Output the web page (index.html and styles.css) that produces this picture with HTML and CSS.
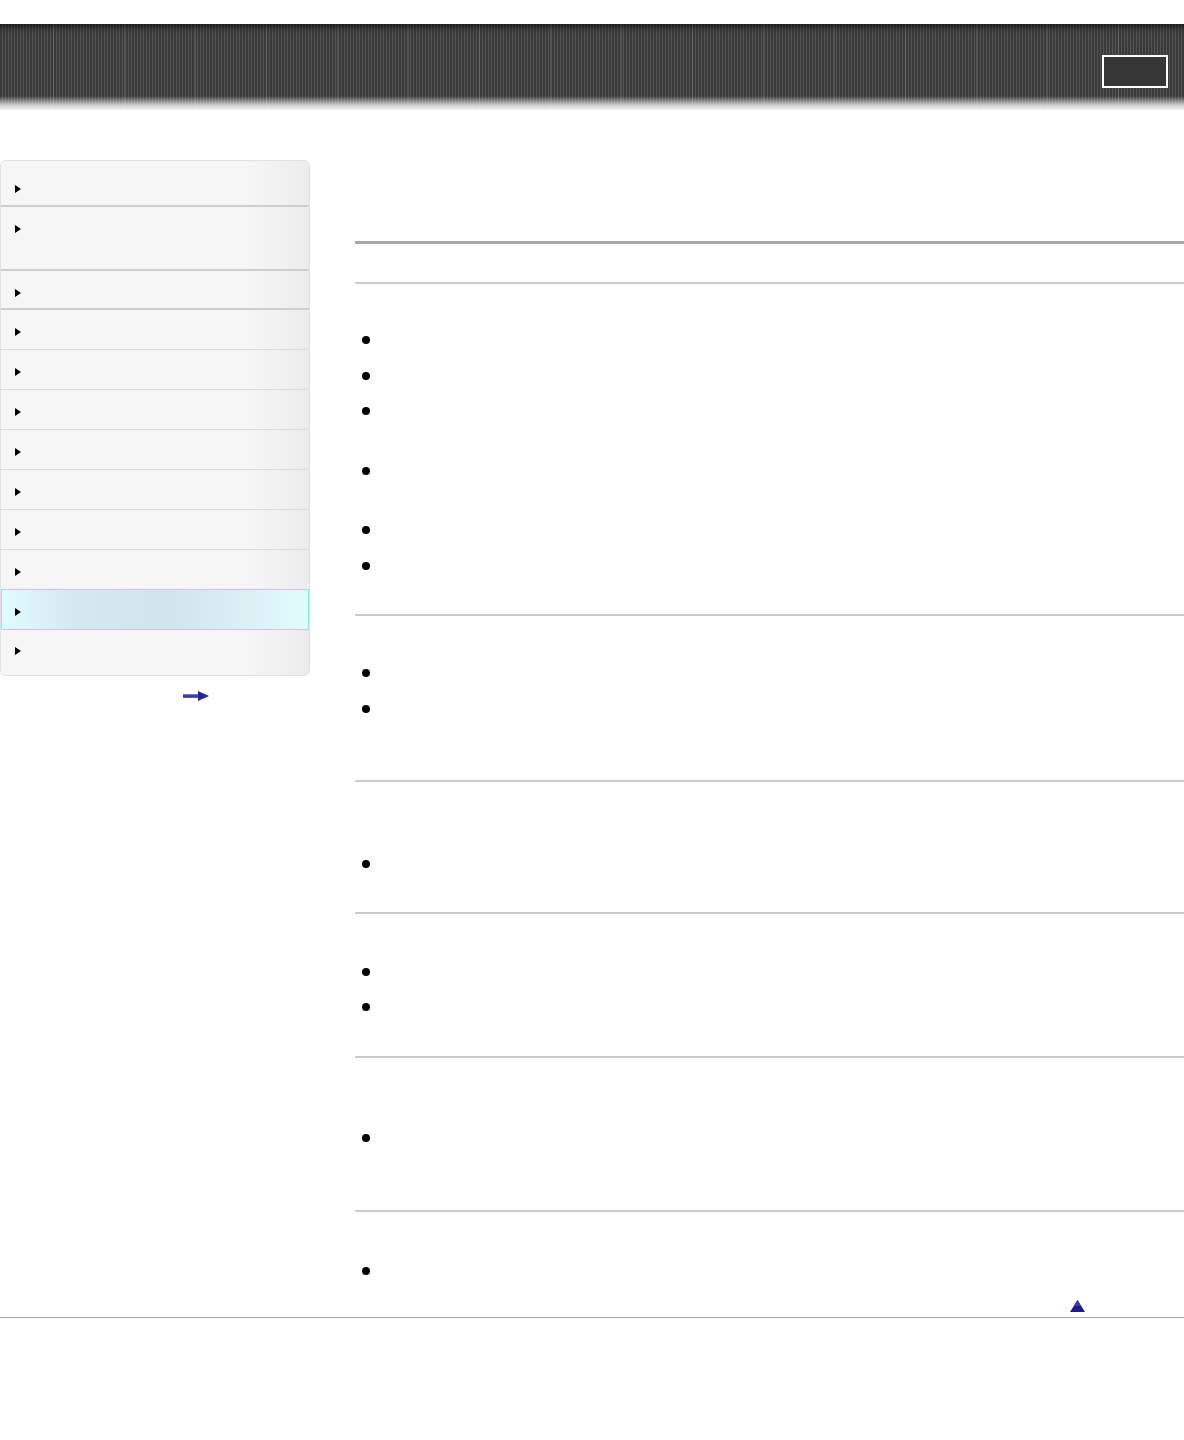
FILE: index.html
```html
<!DOCTYPE html>
<html lang="en">
<head>
<meta charset="utf-8">
<title>Help Guide</title>
<link rel="stylesheet" href="styles.css">
</head>
<body>
<header class="header">
  <div class="header-box"></div>
</header>

<div class="layout">
  <aside class="side">
    <nav class="nav">
      <a class="nav-item first thick"><span class="arr"></span></a>
      <a class="nav-item double thick"><span class="arr"></span></a>
      <a class="nav-item third thick"><span class="arr"></span></a>
      <a class="nav-item"><span class="arr"></span></a>
      <a class="nav-item"><span class="arr"></span></a>
      <a class="nav-item"><span class="arr"></span></a>
      <a class="nav-item"><span class="arr"></span></a>
      <a class="nav-item"><span class="arr"></span></a>
      <a class="nav-item"><span class="arr"></span></a>
      <a class="nav-item pre-active"><span class="arr"></span></a>
      <a class="nav-item active"><span class="arr"></span></a>
      <a class="nav-item last"><span class="arr"></span></a>
    </nav>
    <div class="side-more">
      <svg class="more-arrow" width="26" height="10" viewBox="0 0 26 10">
        <defs>
          <linearGradient id="g1" x1="0" y1="0" x2="0" y2="1">
            <stop offset="0" stop-color="#8a8ad0"/>
            <stop offset="0.5" stop-color="#2b2b9a"/>
            <stop offset="1" stop-color="#6a6ab8"/>
          </linearGradient>
        </defs>
        <rect x="0" y="3" width="17" height="4" fill="url(#g1)"/>
        <path d="M15 0 L26 5 L15 10 Z" fill="#25259a"/>
      </svg>
    </div>
  </aside>

  <main class="main">
    <div class="title-area"></div>
    <div class="subtitle"></div>

    <section class="sec s1">
      <ul class="list">
        <li class="one"><span class="dot"></span></li>
        <li class="one"><span class="dot"></span></li>
        <li class="two"><span class="dot"></span></li>
        <li class="two"><span class="dot"></span></li>
        <li class="one"><span class="dot"></span></li>
        <li class="one"><span class="dot"></span></li>
      </ul>
    </section>

    <section class="sec s2">
      <ul class="list">
        <li class="one"><span class="dot"></span></li>
        <li class="two"><span class="dot"></span></li>
      </ul>
    </section>

    <section class="sec s3">
      <ul class="list">
        <li class="one"><span class="dot"></span></li>
      </ul>
    </section>

    <section class="sec s4">
      <ul class="list">
        <li class="one"><span class="dot"></span></li>
        <li class="one"><span class="dot"></span></li>
      </ul>
    </section>

    <section class="sec s5">
      <ul class="list">
        <li class="two"><span class="dot"></span></li>
      </ul>
    </section>

    <section class="sec s6">
      <ul class="list">
        <li class="one"><span class="dot"></span></li>
      </ul>
    </section>

    <div class="totop">
      <svg width="15" height="12" viewBox="0 0 15 12">
        <path d="M7.5 0 L15 12 L0 12 Z" fill="#1c1c8e"/>
        <path d="M7.5 0 L11 6 L4 6 Z" fill="#3a3aa8"/>
      </svg>
    </div>
  </main>
</div>

<footer class="footer"></footer>
</body>
</html>
```

FILE: styles.css
```css
html, body {
  margin: 0;
  padding: 0;
  background: #ffffff;
  font-family: "Liberation Sans", Arial, sans-serif;
  font-size: 13px;
  color: #000;
}

.header {
  margin-top: 24px;
  height: 86px;
  display: flex;
  justify-content: flex-end;
  align-items: flex-start;
  padding-right: 16px;
  box-sizing: border-box;
  background:
    linear-gradient(to bottom,
      rgba(0,0,0,0.55) 0px,
      rgba(0,0,0,0.15) 5px,
      rgba(0,0,0,0) 10px,
      rgba(0,0,0,0) 72px,
      rgba(240,240,240,0.35) 76px,
      rgba(240,240,240,0.8) 81px,
      #f2f2f2 86px),
    repeating-linear-gradient(90deg,
      rgba(255,255,255,0) 0px,
      rgba(255,255,255,0) 53px,
      rgba(255,255,255,0.12) 53px,
      rgba(255,255,255,0.12) 54px,
      rgba(255,255,255,0) 54px,
      rgba(255,255,255,0) 71px),
    repeating-linear-gradient(90deg,
      #3a3a3a 0px,
      #3a3a3a 2px,
      #545454 2px,
      #545454 3px);
}

.header-box {
  margin-top: 31px;
  width: 62px;
  height: 29px;
  border: 2px solid #ffffff;
  background: #363636;
}

.layout {
  display: flex;
  gap: 45px;
  margin-top: 50px;
}

.side {
  width: 310px;
  flex: none;
}

.nav {
  display: flex;
  flex-direction: column;
  border: 1px solid #e2e2e2;
  border-radius: 6px;
  overflow: hidden;
  background: linear-gradient(to right, #f6f6f6 0%, #f6f6f6 80%, #ececec 100%);
}

.nav-item {
  display: block;
  height: 40px;
  padding: 18px 0 0 14px;
  box-sizing: border-box;
  border-bottom: 1px solid #dcdcdc;
}

.nav-item.thick {
  border-bottom: 2px solid #cdcdcd;
}

.nav-item.first {
  height: 46px;
  padding-top: 24px;
}

.nav-item.double {
  height: 64px;
}

.nav-item.third {
  height: 39px;
}

.nav-item.pre-active {
  border-bottom: 1px solid #8fe2f4;
}

.nav-item.active {
  border-bottom: 1px solid #8fe2f4;
  box-shadow: inset 1px 0 0 #8fe2f4, inset -1px 0 0 #8fe2f4;
  background: linear-gradient(to right, #e2fbfe 0%, #d2e9ee 25%, #d0e6ea 55%, #d8eef2 75%, #e2fcfe 100%);
}

.nav-item.last {
  height: 45px;
  border-bottom: none;
  padding-top: 17px;
}

.arr {
  display: inline-block;
  width: 0;
  height: 0;
  border-left: 6px solid #000;
  border-top: 4px solid transparent;
  border-bottom: 4px solid transparent;
  vertical-align: top;
}

.side-more {
  display: flex;
  justify-content: flex-start;
  padding: 15px 0 0 183px;
}

.more-arrow {
  display: block;
}

.main {
  flex: 1;
  min-width: 0;
}

.title-area {
  height: 81px;
  border-bottom: 3px solid #a8a8a8;
}

.subtitle {
  height: 38px;
}

.sec {
  border-top: 2px solid #cbcbcb;
  padding: 40px 0 30px 0;
}

.sec.s1 {
  padding-top: 39px;
}

.sec.s2 {
  padding-bottom: 29px;
}

.sec.s3 {
  padding-top: 65px;
  padding-bottom: 29px;
}

.sec.s4 {
  padding-top: 41px;
}

.sec.s5 {
  padding-top: 63px;
}

.sec.s6 {
  padding-top: 42px;
  padding-bottom: 0;
}

.list {
  list-style: none;
  margin: 0;
  padding: 0;
}

.list li {
  display: flex;
  align-items: flex-start;
  padding-left: 7px;
}

.list li.one {
  height: 35.5px;
}

.list li.two {
  height: 59.5px;
}

.dot {
  display: block;
  width: 8px;
  height: 8px;
  border-radius: 50%;
  background: #000;
  margin-top: 13px;
}

.totop {
  display: flex;
  justify-content: flex-end;
  padding: 10px 99px 5px 0;
}

.totop svg {
  display: block;
}

.footer {
  border-top: 1px solid #a8a8a8;
  height: 122px;
}
```
